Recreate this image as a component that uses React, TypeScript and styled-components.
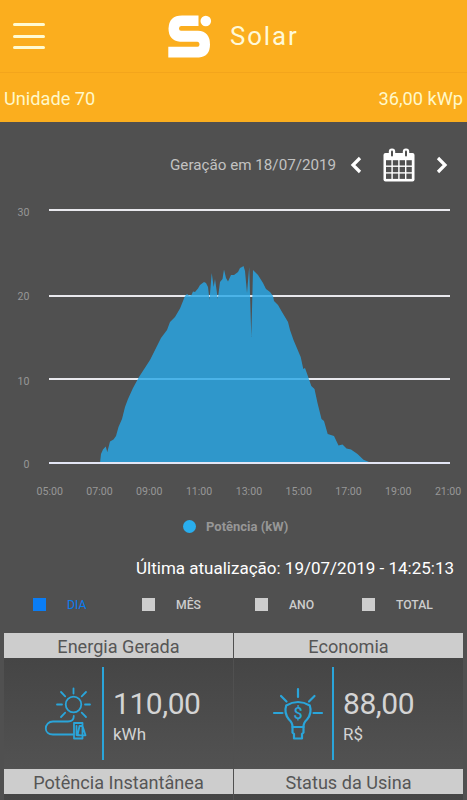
import React from 'react';
import styled, { createGlobalStyle } from 'styled-components';

const GlobalStyle = createGlobalStyle`
  * { box-sizing: border-box; }
  body {
    margin: 0;
    background: #505050;
    font-family: Roboto, "Liberation Sans", sans-serif;
  }
`;

const Screen = styled.div`
  width: 467px;
  height: 800px;
  overflow: hidden;
  display: flex;
  flex-direction: column;
  background: #505050;
`;

const TopBar = styled.header`
  flex: none;
  height: 73px;
  display: grid;
  grid-template-columns: 168px 62px 1fr;
  align-items: center;
  background: #fbae1e;
  border-bottom: 1px solid #f3a51c;
`;

const MenuButton = styled.button`
  justify-self: start;
  width: 32px;
  height: 26px;
  margin: 0 0 0 13px;
  padding: 0;
  border: 0;
  background: none;
  display: flex;
  flex-direction: column;
  justify-content: space-between;
`;

const MenuLine = styled.span`
  width: 32px;
  height: 3px;
  border-radius: 2px;
  background: #fffbd2;
`;

const Brand = styled.span`
  color: #fff9d8;
  font-size: 25.8px;
  line-height: 30px;
  letter-spacing: 1.9px;
`;

const UnitBar = styled.div`
  flex: none;
  height: 49px;
  padding: 1px 4px 0 4px;
  display: flex;
  align-items: center;
  justify-content: space-between;
  background: #fbae1e;
  color: #fff8c9;
  font-size: 18.2px;
`;

const DateBar = styled.div`
  flex: none;
  height: 73px;
  padding: 12px 18px 0 170px;
  display: flex;
  align-items: center;
`;

const DateText = styled.span`
  flex: none;
  width: 180px;
  color: #c2c2c2;
  font-size: 15.2px;
  white-space: nowrap;
`;

const PlainButton = styled.button`
  flex: none;
  display: flex;
  padding: 0;
  border: 0;
  background: none;

  & + & {
    margin-left: 21px;
  }
`;

const Chart = styled.svg`
  flex: none;
  display: block;
`;

const AxisLabel = styled.text`
  fill: #979797;
  font-size: 10.6px;
`;

const Legend = styled.div`
  flex: none;
  height: 42px;
  padding-left: 183px;
  display: flex;
  align-items: center;
  gap: 10px;
  color: #979797;
  font-size: 13px;
  font-weight: 700;
`;

const LegendDot = styled.span`
  width: 13px;
  height: 13px;
  border-radius: 50%;
  background: #29aeee;
`;

const Updated = styled.div`
  flex: none;
  height: 41px;
  padding-right: 13px;
  display: flex;
  align-items: center;
  justify-content: flex-end;
  color: #fff;
  font-size: 17px;
  white-space: nowrap;
`;

const Periods = styled.div`
  flex: none;
  height: 45px;
  padding: 10px 0 0 33px;
  display: grid;
  grid-template-columns: 109px 113px 107px auto;
  align-items: start;
`;

const Period = styled.button<{ $active?: boolean }>`
  display: flex;
  align-items: center;
  gap: 21px;
  height: 13px;
  padding: 0;
  border: 0;
  background: none;
  font-family: inherit;
  font-size: 12.2px;
  font-weight: ${(p) => (p.$active ? 400 : 500)};
  color: ${(p) => (p.$active ? '#0a7cf0' : '#cdcdcd')};
`;

const PeriodBox = styled.span<{ $active?: boolean }>`
  width: 13px;
  height: 13px;
  background: ${(p) => (p.$active ? '#0a7df5' : '#cdcdcd')};
`;

const Cards = styled.div`
  flex: none;
  padding: 0 4px;
  display: grid;
  grid-template-columns: 229px 229px;
  column-gap: 1px;
`;

const Card = styled.section`
  display: flex;
  flex-direction: column;
`;

const CardTitle = styled.h2`
  height: 25px;
  margin: 0;
  padding-top: 1px;
  background: #cdcdcd;
  color: #565656;
  font-size: 18.1px;
  font-weight: 400;
  line-height: 25px;
  text-align: center;
  white-space: nowrap;
`;

const CardBody = styled.div`
  height: 111px;
  padding: 9px 0 0 36px;
  display: flex;
  align-items: flex-start;
  background: linear-gradient(#454545, #525252);
`;

const Divider = styled.span`
  width: 2px;
  height: 93px;
  margin: 0 9px 0 0;
  background: #2aa5da;
`;

const Reading = styled.div`
  display: flex;
  flex-direction: column;
  padding-top: 19px;
  color: #d4d4d4;
`;

const Amount = styled.span`
  font-size: 30px;
  letter-spacing: -0.45px;
  line-height: 36px;
`;

const Unit = styled.span`
  margin-top: 2px;
  font-size: 17px;
  line-height: 20px;
`;

const CardIcon = styled.svg<{ $weight: number }>`
  width: 62px;
  height: 80px;
  fill: none;
  stroke: #2aa5da;
  stroke-width: ${(p) => p.$weight};
  stroke-linecap: round;
  stroke-linejoin: round;
`;

const CurrencyMark = styled.text`
  fill: #2aa5da;
  stroke: none;
  font-size: 16px;
  font-weight: 500;
`;

const area: [number, number][] = [
  [100, 463], [101, 454], [103, 449.5], [105.7, 446.5], [107.3, 452], [110, 441.5],
  [113.5, 439.5], [116, 436], [118.5, 427], [122, 419], [125, 407], [128, 399],
  [133, 388], [139, 377], [150, 360], [157, 346], [161, 338], [167, 330], [170, 322],
  [175, 317], [180, 308.5], [185, 296], [187, 294], [189, 295.5], [191.5, 295],
  [193, 291.5], [195, 292], [198, 288.5], [200, 285], [204, 282], [206, 283],
  [208, 287], [209.5, 300], [211.7, 273], [213.7, 287], [215, 279], [217.8, 299],
  [220, 282], [222.5, 279], [224, 269.5], [226, 278], [228, 281.5], [231, 275],
  [234, 275], [238, 272], [240, 268], [242, 267], [243.5, 266], [245, 271],
  [247, 293], [249.2, 267], [251.3, 337], [253, 270], [258, 275], [263, 283],
  [266, 289], [270, 292], [273, 296], [274, 301], [278, 305], [282, 312],
  [288, 322], [290, 330], [293.5, 340], [300.7, 357], [303.3, 369], [305, 368],
  [307.5, 375], [311.3, 386], [314.5, 389], [317.5, 403], [321.5, 419], [324, 421],
  [327.7, 434], [334, 436], [338.5, 445.5], [342.5, 444.5], [346.5, 448.5],
  [351, 449.5], [357.5, 454], [363.5, 459.7], [369, 462], [374, 463],
];

const levels = [
  { label: '30', line: 210, text: 216 },
  { label: '20', line: 296, text: 300 },
  { label: '10', line: 379, text: 384.5 },
  { label: '0', line: 463, text: 468 },
];

const hours = ['05:00', '07:00', '09:00', '11:00', '13:00', '15:00', '17:00', '19:00', '21:00'];

function Logo() {
  return (
    <svg width="44" height="43" viewBox="168 14.500 44 43" fill="#fff">
      <path d="M182 15H198.500V25.500H181Q179 25.500 179 28Q179 30.300 181 30.300H198Q210 31 210 44Q210 56 199 57H168.300V46.300H197.500Q199.500 46.300 199.500 43.800Q199.500 41.300 197.500 41.300H180Q168.500 40 168.500 28Q169 15 182 15Z" />
      <circle cx="205.800" cy="20.500" r="5.300" />
    </svg>
  );
}

function Chevron({ right }: { right?: boolean }) {
  return (
    <svg width="12" height="18" viewBox="0 0 12 18" fill="none" stroke="#fff" strokeWidth="3.200">
      <path d={right ? 'M2 2L9 9L2 16' : 'M10 2L3 9L10 16'} />
    </svg>
  );
}

function CalendarIcon() {
  const cells = [0, 1, 2, 3].flatMap((c) => [0, 1, 2].map((r) => [c, r]));
  return (
    <svg width="32" height="34" viewBox="0 0 32 34">
      <rect x="0.500" y="5" width="31" height="28.500" rx="2" fill="#fff" />
      {cells.map(([c, r]) => (
        <rect key={`${c}-${r}`} x={3 + c * 6.8} y={12.2 + r * 6.7} width="5.400" height="5.300" fill="#505050" />
      ))}
      {[9, 23].map((x) => (
        <g key={x}>
          <rect x={x - 3.2} y="0.500" width="6.400" height="9.500" rx="3" fill="#fff" />
          <rect x={x - 1} y="2.600" width="2" height="6" rx="1" fill="#505050" />
        </g>
      ))}
    </svg>
  );
}

function SunPlugIcon() {
  return (
    <CardIcon viewBox="40 667 62 80" $weight={1.8}>
      <circle cx="73.500" cy="704.500" r="7.800" />
      <path d="M73.500 688.500V693.500M61 692L65.200 696.300M86 692L81.700 696.300M57 704.500H62M85 704.500H90M61 717L65.200 712.700M86 717L81.700 712.700" />
      <path d="M73.800 716C73.800 720 71.500 721.500 68 721.500H53C48.500 721.500 45.800 725 45.800 728.500C45.800 732 48.500 734.500 53 734.500H73" />
      <path d="M74 723H82.500V738.500H74ZM76.500 726V735H79M79.500 726L77.500 735.300H85.500L82.500 726Z" />
    </CardIcon>
  );
}

function BulbIcon() {
  return (
    <CardIcon viewBox="270 667 62 80" $weight={2.2}>
      <path d="M298 689V697M281 696L286.500 701.500M314.500 696L309 701.500M274 713H282.500M313.500 713H322" />
      <path d="M286.200 705.500Q298 698.500 309.800 705.500Q312.300 713 307 719.500Q303.500 722.500 303.500 727H292.500Q292.500 722.500 289 719.500Q283.700 713 286.200 705.500Z" />
      <path d="M292.500 727V732.500L294 734V738.500H302V734L303.500 732.500V727" />
      <CurrencyMark x="298" y="719" textAnchor="middle">$</CurrencyMark>
    </CardIcon>
  );
}

type CardProps = { title: string; icon?: React.ReactNode; amount?: string; unit?: string };

function MetricCard({ title, icon, amount, unit }: CardProps) {
  return (
    <Card>
      <CardTitle>{title}</CardTitle>
      <CardBody>
        {icon}
        {amount && (
          <>
            <Divider />
            <Reading>
              <Amount>{amount}</Amount>
              <Unit>{unit}</Unit>
            </Reading>
          </>
        )}
      </CardBody>
    </Card>
  );
}

function PeriodOption({ label, active }: { label: string; active?: boolean }) {
  return (
    <Period $active={active}>
      <PeriodBox $active={active} />
      {label}
    </Period>
  );
}

export default function App() {
  return (
    <>
      <GlobalStyle />
      <Screen>
        <TopBar>
          <MenuButton aria-label="Menu">
            <MenuLine />
            <MenuLine />
            <MenuLine />
          </MenuButton>
          <Logo />
          <Brand>Solar</Brand>
        </TopBar>
        <UnitBar>
          <span>Unidade 70</span>
          <span>36,00 kWp</span>
        </UnitBar>
        <DateBar>
          <DateText>Geração em 18/07/2019</DateText>
          <PlainButton><Chevron /></PlainButton>
          <PlainButton><CalendarIcon /></PlainButton>
          <PlainButton><Chevron right /></PlainButton>
        </DateBar>
        <Chart width="467" height="310" viewBox="0 195 467 310">
          {levels.map((l) => (
            <g key={l.label}>
              <path d={`M49 ${l.line}H450`} stroke="#e9e9ee" strokeWidth="2" />
              <AxisLabel x="29.500" y={l.text} textAnchor="end">{l.label}</AxisLabel>
            </g>
          ))}
          <polygon points={area.map((p) => p.join(',')).join(' ')} fill="#28a7e6" fillOpacity="0.82" />
          <path d="M49 463H450" stroke="#e3e6f5" strokeWidth="2" />
          {hours.map((h, i) => (
            <AxisLabel key={h} x={49.7 + i * 49.8} y="495" textAnchor="middle">{h}</AxisLabel>
          ))}
        </Chart>
        <Legend>
          <LegendDot />
          Potência (kW)
        </Legend>
        <Updated>Última atualização: 19/07/2019 - 14:25:13</Updated>
        <Periods>
          <PeriodOption label="DIA" active />
          <PeriodOption label="MÊS" />
          <PeriodOption label="ANO" />
          <PeriodOption label="TOTAL" />
        </Periods>
        <Cards>
          <MetricCard title="Energia Gerada" icon={<SunPlugIcon />} amount="110,00" unit="kWh" />
          <MetricCard title="Economia" icon={<BulbIcon />} amount="88,00" unit="R$" />
          <MetricCard title="Potência Instantânea" />
          <MetricCard title="Status da Usina" />
        </Cards>
      </Screen>
    </>
  );
}
